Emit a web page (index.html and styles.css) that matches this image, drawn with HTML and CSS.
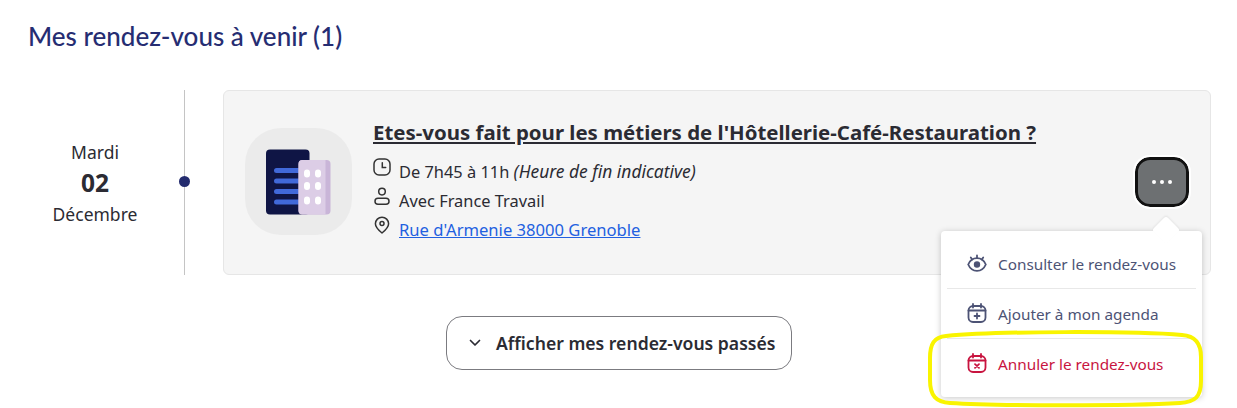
FILE: index.html
```html
<!DOCTYPE html>
<html lang="fr">
<head>
    <meta charset="UTF-8">
    <title>Mes rendez-vous</title>
    <link rel="stylesheet" href="styles.css">
</head>
<body>
    <h2 class="page-title">Mes rendez-vous à venir (1)</h2>

    <div class="timeline">
        <div class="date">
            <span>Mardi</span>
            <strong>02</strong>
            <span>Décembre</span>
        </div>
        <div class="rail"><span class="rail-dot"></span></div>

        <div class="card">
            <div class="card-logo">
                <svg width="66" height="66" viewBox="0 0 66 66">
                    <rect x="0" y="0.5" width="43.5" height="65" rx="4" fill="#0f1545"/>
                    <rect x="8" y="19" width="30" height="5" rx="2.5" fill="#4169d9"/>
                    <rect x="8" y="29.5" width="30" height="5" rx="2.5" fill="#4169d9"/>
                    <rect x="8" y="40" width="30" height="5" rx="2.5" fill="#4169d9"/>
                    <rect x="8" y="50.5" width="30" height="5" rx="2.5" fill="#4169d9"/>
                    <rect x="32.5" y="11" width="32" height="54.5" rx="4" fill="#c9b5d8"/>
                    <path d="M36.500 11h23v54.500h-23a4 4 0 0 1-4-4V15a4 4 0 0 1 4-4z" fill="#dccde6"/>
                    <rect x="38" y="20.500" width="6" height="8" rx="3" fill="#fff"/>
                    <rect x="49" y="20.500" width="6" height="8" rx="3" fill="#fff"/>
                    <rect x="38" y="33" width="6" height="8" rx="3" fill="#fff"/>
                    <rect x="49" y="33" width="6" height="8" rx="3" fill="#fff"/>
                    <rect x="38" y="47.500" width="6" height="8" rx="3" fill="#fff"/>
                    <rect x="49" y="47.500" width="6" height="8" rx="3" fill="#fff"/>
                </svg>
            </div>
            <div class="card-body">
                <a class="card-title" href="#">Etes-vous fait pour les métiers de l'Hôtellerie-Café-Restauration ?</a>
                <div class="info">
                    <svg width="18" height="18" viewBox="0 0 18 18" fill="none" stroke="#333" stroke-width="1.5">
                        <rect x="1" y="1" width="16" height="16" rx="5"/>
                        <path d="M9.300 4.800v4.800h3.400" stroke-linecap="round"/>
                    </svg>
                    <span>De 7h45 à 11h <em>(Heure de fin indicative)</em></span>
                </div>
                <div class="info">
                    <svg width="18" height="18" viewBox="0 0 18 18" fill="none" stroke="#333" stroke-width="1.5">
                        <circle cx="9" cy="4.600" r="3.300"/>
                        <rect x="2" y="11.200" width="14" height="6" rx="3"/>
                    </svg>
                    <span>Avec France Travail</span>
                </div>
                <div class="info">
                    <svg width="18" height="18" viewBox="0 0 18 18" fill="none" stroke="#333" stroke-width="1.5">
                        <path d="M9 17c-3-2.400-6.600-5.400-6.600-9.200a6.600 6.600 0 0 1 13.200 0C15.600 11.600 12 14.600 9 17z" stroke-linejoin="round"/>
                        <circle cx="9" cy="7.600" r="2"/>
                    </svg>
                    <a class="address" href="#">Rue d'Armenie 38000 Grenoble</a>
                </div>
            </div>
            <button class="more-btn" type="button">
                <span></span><span></span><span></span>
            </button>
        </div>
    </div>

    <div class="past">
        <button class="past-btn" type="button">
            <svg width="12" height="8" viewBox="0 0 12 8" fill="none" stroke="#2b2b33" stroke-width="1.700" stroke-linecap="round" stroke-linejoin="round">
                <path d="M1.500 1.500 6 6l4.500-4.500"/>
            </svg>
            Afficher mes rendez-vous passés
        </button>
    </div>

    <div class="menu">
        <span class="menu-arrow"></span>
        <div class="menu-item">
            <svg width="20" height="20" viewBox="0 0 20 20" fill="none" stroke="#4d5375" stroke-width="1.800">
                <path d="M1.200 11.500C3 7.300 6 5.200 10 5.200s7 2.100 8.800 6.300c-1.800 4.200-4.800 6.300-8.800 6.300s-7-2.100-8.800-6.300z"/>
                <circle cx="10" cy="11.500" r="2.300" fill="#4d5375"/>
                <path d="M10 5V2.500M5.200 6.500 3.800 4.500M14.800 6.500l1.400-2" stroke-linecap="round"/>
            </svg>
            <span>Consulter le rendez-vous</span>
        </div>
        <div class="menu-item">
            <svg width="20" height="20" viewBox="0 0 20 20" fill="none" stroke="#4d5375" stroke-width="1.800">
                <rect x="1.500" y="3" width="17" height="16" rx="4.500"/>
                <path d="M1.500 7.500h17M6 1v3.500M14 1v3.500" stroke-linecap="round"/>
                <path d="M10 10.500v5M7.500 13h5" stroke-linecap="round"/>
            </svg>
            <span>Ajouter à mon agenda</span>
        </div>
        <div class="menu-item menu-item-danger">
            <svg width="20" height="20" viewBox="0 0 20 20" fill="none" stroke="#c8143f" stroke-width="1.800">
                <rect x="1.500" y="3" width="17" height="16" rx="4.500"/>
                <path d="M1.500 7.500h17M6 1v3.500M14 1v3.500" stroke-linecap="round"/>
                <path d="m8 11.200 4 3.600M12 11.200l-4 3.600" stroke-linecap="round"/>
            </svg>
            <span>Annuler le rendez-vous</span>
        </div>
    </div>

    <svg class="highlight" width="282" height="82" viewBox="0 0 282 82" fill="none">
        <path d="M20 6C70 1 210 1 256 5c13 1 19 8 19 22v24c0 16-6 21-21 22-50 3-184 3-230 0C10 72 4 66 4 50V28C4 14 8 7 20 6z" stroke="#f9f400" stroke-width="4"/>
    </svg>
</body>
</html>
```

FILE: styles.css
```css
body {
    font-family: "Noto Sans", "Open Sans", sans-serif;
    margin: 0;
    height: 408px;
    overflow: hidden;
    position: relative;
    background-color: #fff;
    color: #2b2b33;
}
.page-title {
    margin: 0;
    padding: 20px 28px 0;
    font-family: "Lato", sans-serif;
    font-size: 26px;
    line-height: 32px;
    font-weight: 500;
    color: #262d72;
}
.timeline {
    display: flex;
    margin-top: 38px;
    padding-left: 28px;
    height: 185px;
}
.date {
    width: 134px;
    display: flex;
    flex-direction: column;
    align-items: center;
    justify-content: center;
    gap: 3px;
    font-size: 17.500px;
    line-height: 28px;
    padding-top: 1px;
    box-sizing: border-box;
}
.date strong {
    font-size: 24.500px;
}
.rail {
    width: 1px;
    margin-left: 22px;
    margin-right: 38px;
    background-color: #c4c4c4;
    position: relative;
}
.rail-dot {
    position: absolute;
    left: -5px;
    top: 86px;
    width: 11px;
    height: 11px;
    border-radius: 50%;
    background-color: #232b6e;
}
.card {
    width: 988px;
    box-sizing: border-box;
    display: flex;
    background-color: #f5f5f5;
    border: 1px solid #e6e6e6;
    border-radius: 6px;
    padding: 37px 21px 0;
}
.card-logo {
    width: 107px;
    height: 107px;
    border-radius: 36px;
    background-color: #ebebeb;
    display: flex;
    align-items: center;
    justify-content: center;
    flex-shrink: 0;
}
.card-body {
    margin-left: 21px;
    margin-top: -9px;
    flex: 1;
}
.card-title {
    display: block;
    font-size: 20.430px;
    line-height: 27px;
    font-weight: 700;
    color: #2b2b33;
    margin-bottom: 15px;
}
.info {
    display: flex;
    align-items: flex-start;
    gap: 8px;
    font-size: 16.400px;
    line-height: 22px;
    margin-bottom: 7px;
}
.info em {
    font-size: 17.400px;
    line-height: 20px;
}
.info svg {
    flex-shrink: 0;
    margin-top: -3px;
}
.address {
    color: #2260e0;
    font-size: 16.600px;
}
.more-btn {
    align-self: flex-start;
    margin-top: 29px;
    margin-right: 0;
    width: 54px;
    height: 50px;
    box-sizing: border-box;
    background-color: #6d7072;
    border: 3px solid #111;
    border-radius: 15px;
    outline: 2px solid #fff;
    display: flex;
    align-items: center;
    justify-content: center;
    gap: 4px;
    padding: 0;
}
.more-btn span {
    width: 4px;
    height: 4px;
    border-radius: 50%;
    background-color: #fff;
}
.past {
    display: flex;
    justify-content: center;
    margin-top: 41px;
    padding-left: 1px;
}
.past-btn {
    display: flex;
    align-items: center;
    gap: 15px;
    width: 346px;
    height: 54px;
    box-sizing: border-box;
    padding: 0 0 0 22px;
    background-color: #fff;
    border: 1px solid #7b7b80;
    border-radius: 16px;
    font-family: inherit;
    font-size: 17.600px;
    font-weight: 600;
    color: #2b2b33;
}
.menu {
    position: absolute;
    left: 941px;
    top: 231px;
    width: 261px;
    height: 166px;
    box-sizing: border-box;
    padding: 8px 6px;
    background-color: #fff;
    border-radius: 4px;
    box-shadow: 0 1px 6px rgba(0, 0, 0, 0.22);
}
.menu-arrow {
    position: absolute;
    left: 215px;
    top: -11px;
    width: 20px;
    height: 20px;
    background-color: #fff;
    transform: rotate(45deg);
    border-radius: 3px;
    box-shadow: -1px -1px 2px rgba(0, 0, 0, 0.06);
}
.menu-item {
    position: relative;
    display: flex;
    align-items: center;
    gap: 11px;
    height: 50px;
    padding-left: 20px;
    padding-top: 1px;
    font-size: 15.300px;
    color: #4d5375;
    border-bottom: 1px solid #e8e8e8;
    box-sizing: border-box;
}
.menu-item svg {
    margin-top: -3px;
}
.menu-item-danger {
    color: #c8143f;
    border-bottom: 0;
    padding-top: 0;
}
.highlight {
    position: absolute;
    left: 926px;
    top: 330px;
}
```
